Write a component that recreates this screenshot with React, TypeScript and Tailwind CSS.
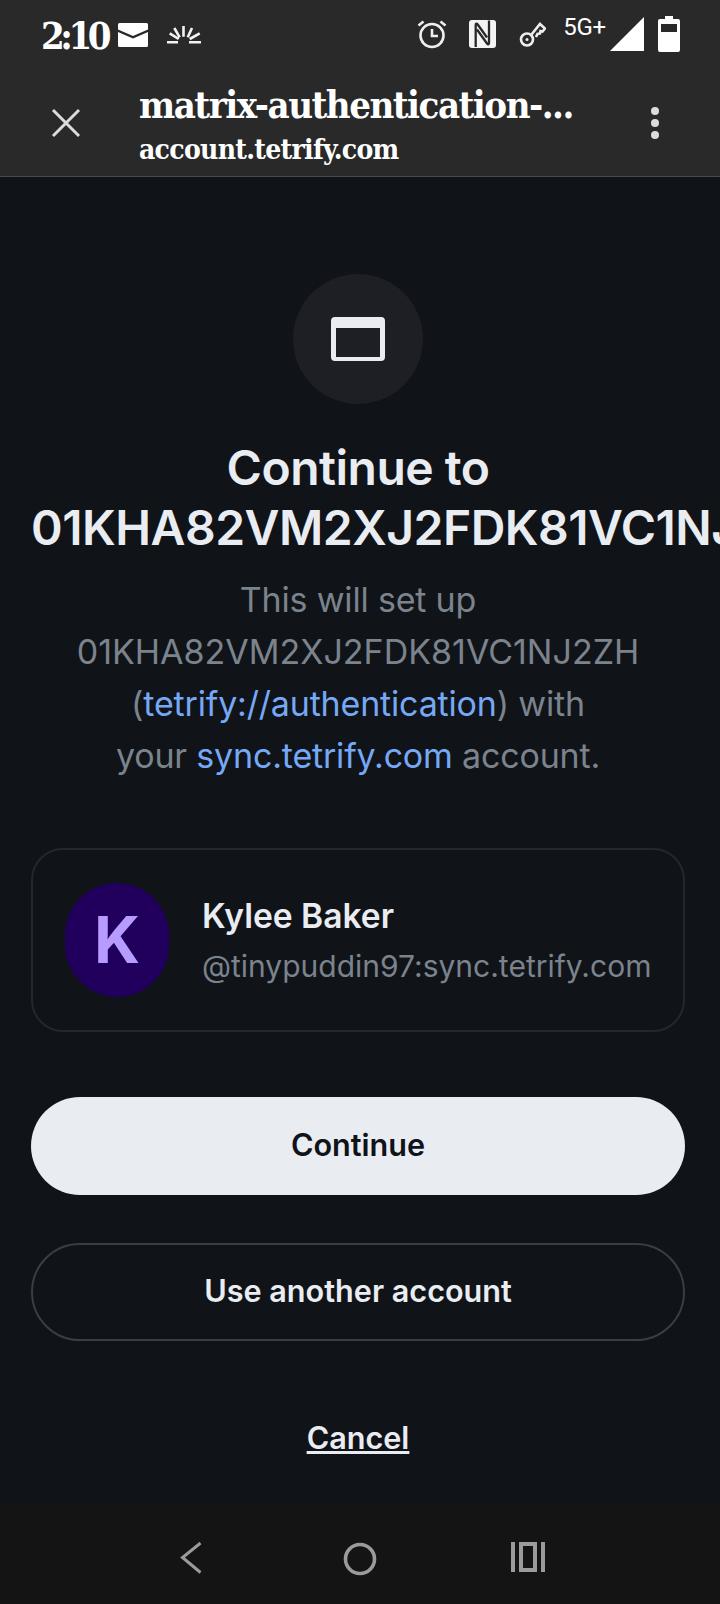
import React from "react";

const slab = "font-['DejaVu_Serif_Condensed','DejaVu_Serif','Liberation_Serif',serif] font-bold";

function Mail() {
  return (
    <svg width="30" height="24" viewBox="0 0 30 24" className="ml-[11px] mt-[9px]">
      <path fill="#fff" d="M1.500 0h27A1.500 1.500 0 0 1 30 1.500V6.500L15 13 0 6.500V1.500A1.500 1.500 0 0 1 1.500 0ZM0 9l15 6.500L30 9V22.500A1.500 1.500 0 0 1 28.500 24h-27A1.500 1.500 0 0 1 0 22.500Z" />
    </svg>
  );
}

function Sun() {
  return (
    <svg width="34" height="18" viewBox="0 0 34 18" className="ml-[19px] mt-[12px]" fill="none" stroke="#f2f2f2" strokeWidth="2.600">
      <path d="M0 16.300h11M22 16.300h12M2.700 7.300l9 5.700M7.300 2l5.400 9.300M16.500 0v10.700M25 2l-4.300 9.300M32.700 7.300l-10 5.700" />
    </svg>
  );
}

function StatusIcons() {
  return (
    <div className="flex items-start">
      <svg width="30" height="30" viewBox="0 0 30 30" className="mt-[19px]" fill="none" stroke="#eee" strokeWidth="2.600">
        <circle cx="15" cy="16.500" r="11.500" />
        <path d="M15 10v7h6M1.500 6.500l5-4M28.500 6.500l-5-4" />
      </svg>
      <svg width="28" height="28" viewBox="0 0 28 28" className="ml-[22px] mt-[20px]">
        <rect width="27" height="28" rx="3" fill="#f4f4f4" />
        <path d="M6.700 27V5c0-1.500 1-1.800 2-.5L18 17.500M20 .5V23c0 1.500-1 1.800-2 .5L8 9.500" fill="none" stroke="#292929" strokeWidth="2.300" />
      </svg>
      <svg width="27" height="27" viewBox="0 0 27 27" className="ml-[22px] mt-[21px]" fill="none" stroke="#eee" strokeWidth="2.600">
        <circle cx="8" cy="18.500" r="6" />
        <circle cx="8" cy="18.500" r="1.500" fill="#eee" stroke="none" />
        <path d="M12.500 13.500 21 3l5 4.500-2.500 3-2-.5-.5 2.500-2.500.5-1.500 3" />
      </svg>
      <span className="ml-[17px] mt-[14px] font-['Roboto',sans-serif] text-[24px] leading-[26px] text-white tracking-[-0.2px]">5G+</span>
      <svg width="34" height="34" viewBox="0 0 34 34" className="mt-[17px] ml-[4px]">
        <path fill="#fff" d="M34 0v34H0Z" />
      </svg>
      <svg width="22" height="36" viewBox="0 0 22 36" className="ml-[14px] mt-[16px]">
        <path fill="#fff" fillRule="evenodd" d="M7 0h8v3h5a2 2 0 0 1 2 2v29a2 2 0 0 1-2 2H2a2 2 0 0 1-2-2V5a2 2 0 0 1 2-2h5ZM3 8v8h16V8Z" />
      </svg>
    </div>
  );
}

function NavBack() {
  return (
    <svg width="22" height="32" viewBox="0 0 22 32" fill="none" stroke="#9b9b9b" strokeWidth="3">
      <path d="M20.500 1 2.500 15.500 20.500 30.500" />
    </svg>
  );
}

function NavHome() {
  return (
    <svg width="34" height="34" viewBox="0 0 34 34" fill="none" stroke="#9b9b9b" strokeWidth="3.600">
      <circle cx="17" cy="17" r="14.500" />
    </svg>
  );
}

function NavRecent() {
  return (
    <svg width="34" height="30" viewBox="0 0 34 30" fill="none" stroke="#9b9b9b" strokeWidth="4">
      <path d="M2 0v30M32 0v30" />
      <rect x="10" y="2" width="14" height="26" />
    </svg>
  );
}

export default function App() {
  return (
    <div className="w-[720px] h-[1604px] overflow-hidden flex flex-col bg-[#101318] font-['Inter',sans-serif]">
      <header className="h-[177px] shrink-0 bg-[#292929] border-b border-[#4a4a4a] flex flex-col">
        <div className="h-[64px] flex justify-between pl-[41px] pr-[40px]">
          <div className="flex items-start pt-[14px]">
            <span className={`${slab} text-[38px] leading-[44px] text-white tracking-[-4.5px]`}>2:10</span>
            <Mail />
            <Sun />
          </div>
          <StatusIcons />
        </div>
        <div className="flex-1 flex items-start">
          <div className="w-[139px] shrink-0 pl-[51px] pt-[44px]">
            <svg width="30" height="30" viewBox="0 0 30 30" fill="none" stroke="#dcdcdc" strokeWidth="3">
              <path d="M2 2l26 26M28 2 2 28" />
            </svg>
          </div>
          <div className="flex-1 flex flex-col pt-[19px]">
            <div className={`${slab} text-[38px] leading-[44px] text-white tracking-[-1.5px]`}>matrix-authentication-...</div>
            <div className={`${slab} text-[28px] leading-[36px] text-white tracking-[-0.7px] mt-[5px]`}>account.tetrify.com</div>
          </div>
          <div className="w-[69px] shrink-0 flex flex-col gap-[4px] pt-[43px]">
            <span className="size-[8px] rounded-full bg-[#dcdcdc]" />
            <span className="size-[8px] rounded-full bg-[#dcdcdc]" />
            <span className="size-[8px] rounded-full bg-[#dcdcdc]" />
          </div>
        </div>
      </header>

      <main className="flex-1 flex flex-col items-center pl-[31px] pr-[35px]">
        <div className="mt-[97px] size-[130px] rounded-full bg-[#1d1f24] flex items-center justify-center">
          <svg width="54" height="44" viewBox="0 0 54 44">
            <path fill="#e9ecf1" fillRule="evenodd" d="M4 0h46a4 4 0 0 1 4 4v36a4 4 0 0 1-4 4H4a4 4 0 0 1-4-4V4a4 4 0 0 1 4-4Zm1 11v29h44V11Z" />
          </svg>
        </div>

        <h1 className="mt-[34px] w-full text-center text-[48px] leading-[60px] font-semibold text-[#e9ecf1] tracking-[-0.5px]">
          <div>Continue to</div>
          <div className="whitespace-nowrap">01KHA82VM2XJ2FDK81VC1NJ2ZH</div>
        </h1>

        <p className="mt-[16px] w-full text-center text-[34px] leading-[52px] text-[#7b838d]">
          <span className="block tracking-[-0.18px]">This will set up</span>
          <span className="block">01KHA82VM2XJ2FDK81VC1NJ2ZH</span>
          <span className="block tracking-[-0.18px]">(<span className="text-[#76a9f5]">tetrify://authentication</span>) with</span>
          <span className="block tracking-[-0.18px]">your <span className="text-[#76a9f5]">sync.tetrify.com</span> account.</span>
        </p>

        <section className="mt-[66px] w-full h-[184px] rounded-[32px] border-2 border-[#24272c] flex items-center pl-[32px] pr-[16px]">
          <div className="w-[104px] h-[114px] rounded-full bg-[#21005d] flex items-center justify-center shrink-0 text-[64px] font-bold text-[#b69cff]">K</div>
          <div className="ml-[33px] flex flex-col">
            <span className="text-[33.6px] leading-[52px] font-semibold text-[#e9ecf1]">Kylee Baker</span>
            <span className="text-[30px] leading-[48px] text-[#7b838d] whitespace-nowrap">@tinypuddin97:sync.tetrify.com</span>
          </div>
        </section>

        <button className="mt-[65px] w-full h-[98px] rounded-full bg-[#e9ecf1] text-[#101318] text-[30.6px] font-semibold pb-[2px]">Continue</button>
        <button className="mt-[48px] w-full h-[98px] rounded-full border-2 border-[#3a3d42] text-[#e9ecf1] text-[30.6px] font-semibold pb-[3px]">Use another account</button>
        <a className="mt-[75px] text-[30.6px] leading-[44px] font-semibold text-[#e9ecf1] underline">Cancel</a>
      </main>

      <nav className="h-[101px] shrink-0 bg-[#141414] flex items-start pt-[39px]">
        <div className="ml-[180px]"><NavBack /></div>
        <div className="ml-[141px]"><NavHome /></div>
        <div className="ml-[134px]"><NavRecent /></div>
      </nav>
    </div>
  );
}
